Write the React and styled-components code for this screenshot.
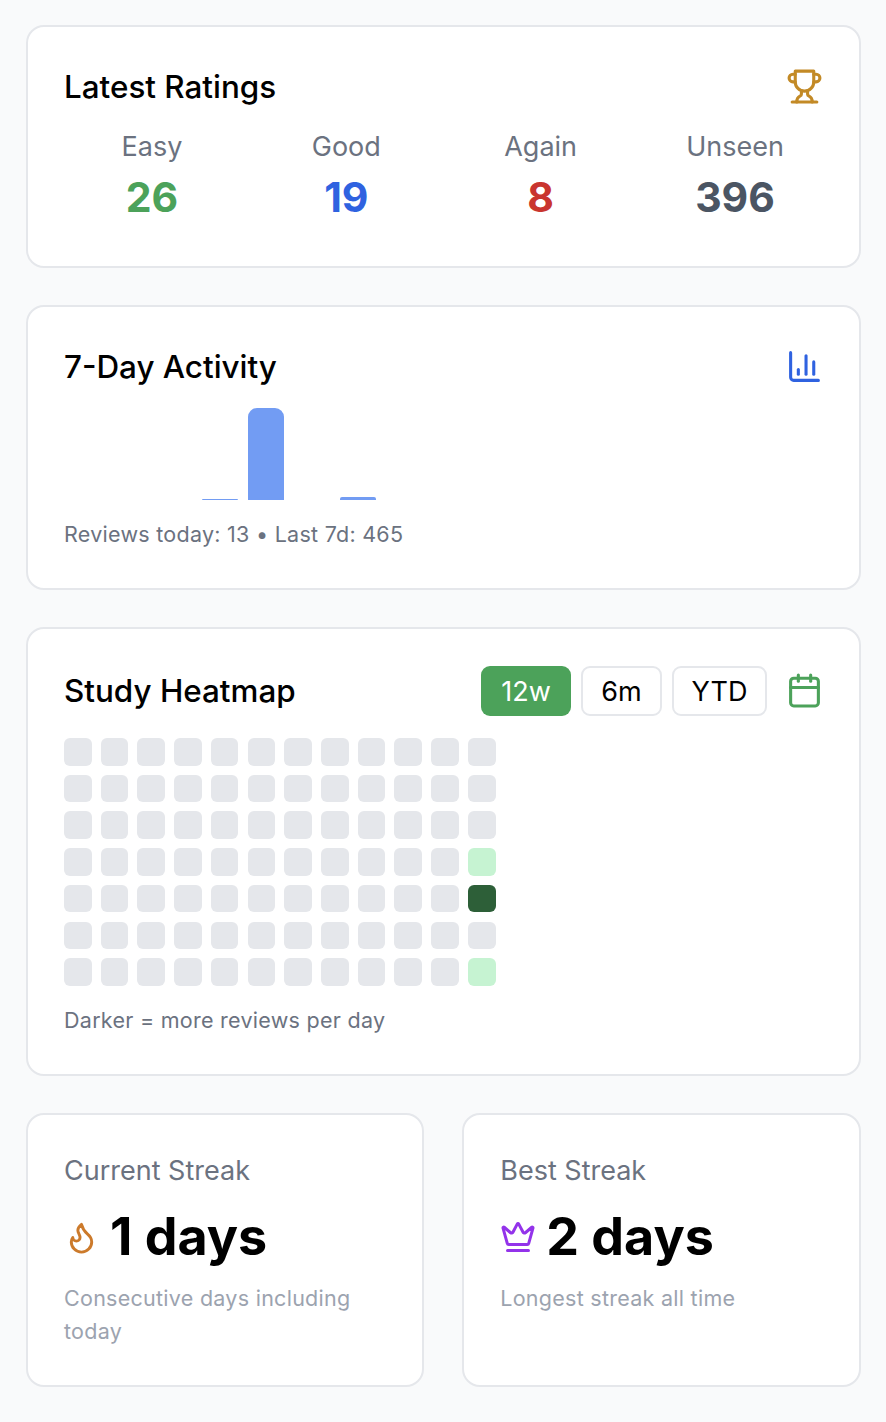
import React from "react";
import styled, { createGlobalStyle } from "styled-components";
import { ChartColumn, Calendar, Flame, Crown } from "lucide-react";

const Global = createGlobalStyle`
  html, body {
    margin: 0;
    padding: 0;
    background: #f9fafb;
    font-family: Inter, "Liberation Sans", sans-serif;
    color: #000;
  }
  * { box-sizing: border-box; }
`;

const Page = styled.div`
  display: flex;
  flex-direction: column;
  gap: 37px;
  padding: 25px 25.5px 36px;
  width: 886px;
`;

const Card = styled.section`
  background: #fff;
  border: 2px solid #e5e7eb;
  border-radius: 18px;
  padding: 37px 35.5px 37px 36.5px;
  height: ${(p) => p.$height}px;
`;

const Header = styled.div`
  display: flex;
  align-items: center;
  justify-content: space-between;

  svg {
    margin-top: -2px;
  }
`;

const Title = styled.h2`
  margin: 0;
  font-size: 31.4px;
  font-weight: 500;
  line-height: 46px;
`;

const Stats = styled.div`
  display: grid;
  grid-template-columns: repeat(4, 1fr);
  gap: 18.4px;
  margin-top: 18px;
`;

const Stat = styled.div`
  text-align: center;
`;

const StatLabel = styled.div`
  font-size: 27px;
  line-height: 37px;
  color: #6b7280;
`;

const StatValue = styled.div`
  font-size: 41px;
  line-height: 50px;
  margin-top: 7px;
  font-weight: 700;
  color: ${(p) => p.$color};
`;

const Bars = styled.div`
  display: flex;
  align-items: flex-end;
  gap: 10px;
  height: 92px;
  margin-top: 18px;
`;

const Bar = styled.div`
  width: 36px;
  height: ${(p) => p.$h}px;
  background: #729cf3;
  border-radius: ${(p) => (p.$h > 10 ? "9px 9px 0 0" : "2px 2px 0 0")};
`;

const Note = styled.div`
  font-size: 21.5px;
  line-height: 33px;
  color: ${(p) => p.$color || "#6b7280"};
  margin-top: ${(p) => p.$top}px;
  letter-spacing: 0.27px;
`;

const Controls = styled.div`
  display: flex;
  align-items: center;
  gap: 10px;
`;

const RangeButton = styled.button`
  height: 50px;
  width: ${(p) => p.$w}px;
  padding: 0;
  border-radius: 9px;
  font-family: inherit;
  font-size: 27px;
  color: ${(p) => (p.$active ? "#fff" : "#000")};
  background: ${(p) => (p.$active ? "#4ca25a" : "#fff")};
  border: ${(p) => (p.$active ? "none" : "2px solid #e5e7eb")};
`;

const IconSlot = styled.div`
  display: flex;
  margin-left: ${(p) => p.$left || 0}px;
`;

const Heat = styled.div`
  display: grid;
  grid-template-columns: repeat(12, 27.6px);
  grid-auto-rows: 27.6px;
  gap: 9.13px;
  margin-top: 22px;
`;

const Cell = styled.div`
  border-radius: 6px;
  background: ${(p) => p.$color};
`;

const Pair = styled.div`
  display: grid;
  grid-template-columns: 1fr 1fr;
  gap: 37.5px;
`;

const StreakLabel = styled.div`
  font-size: 27px;
  line-height: 37px;
  color: #6b7280;
`;

const StreakRow = styled.div`
  display: flex;
  align-items: center;
  gap: ${(p) => p.$gap}px;
  margin-top: 17px;
`;

const StreakValue = styled.div`
  font-size: 52px;
  line-height: 62px;
  font-weight: 700;
`;

// the older lucide trophy, the package's current one has a different cup
const TrophyIcon = () => (
  <svg
    width="37"
    height="37"
    viewBox="0 0 24 24"
    fill="none"
    stroke="#c38a26"
    strokeWidth="2"
    strokeLinecap="round"
    strokeLinejoin="round"
  >
    <path d="M6 9H4.5a2.5 2.5 0 0 1 0-5H6" />
    <path d="M18 9h1.5a2.5 2.5 0 0 0 0-5H18" />
    <path d="M4 22h16" />
    <path d="M10 14.66V17c0 .55-.47.98-.97 1.21C7.85 18.75 7 20.24 7 22" />
    <path d="M14 14.66V17c0 .55.47.98.97 1.21C16.15 18.75 17 20.24 17 22" />
    <path d="M18 2H6v7a6 6 0 0 0 12 0V2Z" />
  </svg>
);

const days = Array.from({ length: 84 }, (_, i) => i);
// the heatmap is filled row by row: 7 rows of 12 weeks
const cellColor = (i) => {
  if (i === 47 || i === 83) return "#c6f3d2";
  if (i === 59) return "#2d5f38";
  return "#e5e7eb";
};

export default function App() {
  return (
    <>
      <Global />
      <Page>
        <Card $height={243}>
          <Header>
            <Title>Latest Ratings</Title>
            <TrophyIcon />
          </Header>
          <Stats>
            <Stat>
              <StatLabel>Easy</StatLabel>
              <StatValue $color="#4ca25a">26</StatValue>
            </Stat>
            <Stat>
              <StatLabel>Good</StatLabel>
              <StatValue $color="#2f62e0">19</StatValue>
            </Stat>
            <Stat>
              <StatLabel>Again</StatLabel>
              <StatValue $color="#c9352f">8</StatValue>
            </Stat>
            <Stat>
              <StatLabel>Unseen</StatLabel>
              <StatValue $color="#4b5563">396</StatValue>
            </Stat>
          </Stats>
        </Card>
        <Card $height={285}>
          <Header>
            <Title>7-Day Activity</Title>
            <ChartColumn size={37} color="#2f62e0" strokeWidth={2} />
          </Header>
          <Bars>
            <Bar $h={0} />
            <Bar $h={0} />
            <Bar $h={0} />
            <Bar $h={1} />
            <Bar $h={92} />
            <Bar $h={0} />
            <Bar $h={3} />
          </Bars>
          <Note $top={18}>Reviews today: 13 • Last 7d: 465</Note>
        </Card>
        <Card $height={449}>
          <Header>
            <Title>Study Heatmap</Title>
            <Controls>
              <RangeButton $active $w={90}>12w</RangeButton>
              <RangeButton $w={81}>6m</RangeButton>
              <RangeButton $w={95}>YTD</RangeButton>
              <IconSlot $left={9}>
                <Calendar size={37} color="#4ca25a" strokeWidth={2} />
              </IconSlot>
            </Controls>
          </Header>
          <Heat>
            {days.map((i) => (
              <Cell key={i} $color={cellColor(i)} />
            ))}
          </Heat>
          <Note $top={18}>Darker = more reviews per day</Note>
        </Card>
        <Pair>
          <Card $height={274}>
            <StreakLabel>Current Streak</StreakLabel>
            <StreakRow $gap={11}>
              <Flame size={35} color="#cc7a2b" strokeWidth={2} />
              <StreakValue>1 days</StreakValue>
            </StreakRow>
            <Note $top={14} $color="#9ca3af">
              Consecutive days including today
            </Note>
          </Card>
          <Card $height={274}>
            <StreakLabel>Best Streak</StreakLabel>
            <StreakRow $gap={10}>
              <Crown size={36} color="#9333ea" strokeWidth={2} />
              <StreakValue>2 days</StreakValue>
            </StreakRow>
            <Note $top={14} $color="#9ca3af">
              Longest streak all time
            </Note>
          </Card>
        </Pair>
      </Page>
    </>
  );
}
